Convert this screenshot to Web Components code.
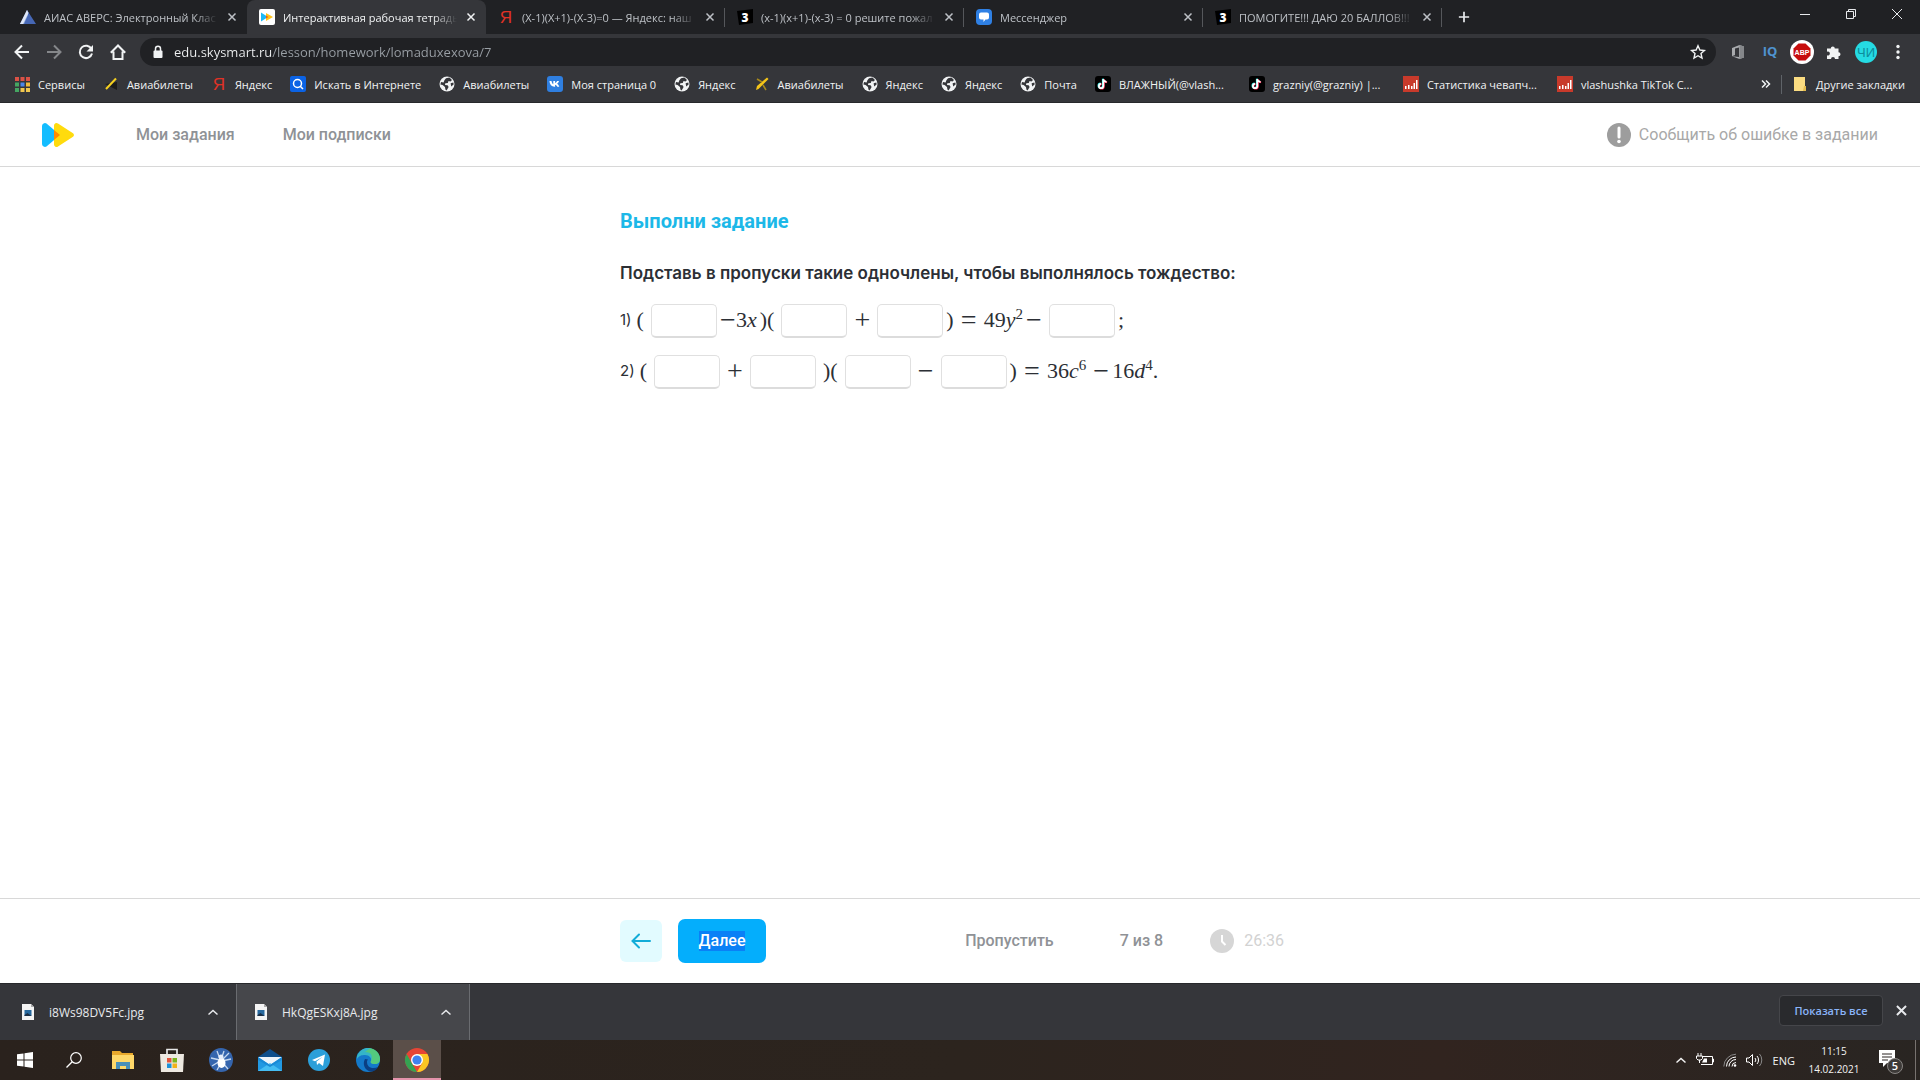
<!DOCTYPE html>
<html lang="ru">
<head>
<meta charset="utf-8">
<title>Интерактивная рабочая тетрадь</title>
<style>
    html, body{
        margin: 0;
        height: 100%;
    }
    body{
        display: flex;
        flex-direction: column;
        background: white;
        font-family: "Open Sans", "Noto Sans", sans-serif;
        font-size: 11px;
    }
    lesson-page{
        flex: 1;
    }
</style>
</head>
<body>
    <browser-tabs></browser-tabs>
    <browser-toolbar></browser-toolbar>
    <bookmarks-bar></bookmarks-bar>
    <lesson-page></lesson-page>
    <downloads-bar></downloads-bar>
    <task-bar></task-bar>

<script>
const globe = '<circle cx="8" cy="8" r="7.5" fill="#f1f3f4"/><path d="M7 2.2 10.5 1.6 13 4 11.5 5.5 9.5 5 8.8 7 6.3 7.2 6 9 8.6 9.3 9.6 11 7.6 14.4 6.4 13.6 6 11 3.6 9 1.4 8.6 2 6 4.6 6.4 5.4 4.2Z" fill="#35363a"/><path d="M11.6 7.2 14.4 6.4 14.6 8.6 12.2 10.4Z" fill="#35363a"/>'
const plane = '<path d="M3 10 13 1.500 14.500 3 4.500 13 2 14Z" fill="#f5c518"/><path d="m3 3 5 3M9 9l3 5" stroke="#a8891c" stroke-width="1.500"/>'

// every icon is [viewBox, markup]
const icons = {
    mountain: ['0 0 16 16', '<path d="M7 1 0 15h6l3-10Z" fill="#8ea9df"/><path d="M7 1 16 15H4L8 6Z" fill="#4667b5"/><path d="M7 1 8.500 4 3 15H0Z" fill="#dfe7f7"/>'],
    sky: ['0 0 16 16', '<rect width="16" height="16" rx="2" fill="#fff"/><path d="M2 3.500 9 8 2 12.500Z" fill="#1ab8f5"/><path d="M7 4 14 8 7 12Z" fill="#ffc31a"/><path d="M7 6.500 9.500 8 7 9.600Z" fill="#e8591c"/>'],
    ya: ['0 0 16 16', '<text x="8" y="14" text-anchor="middle" font-family="Liberation Sans Narrow, Liberation Sans" font-size="17" fill="#e03226">Я</text>'],
    znan: ['0 0 16 16', '<path d="M0 2 16 0v14L2 16Z" fill="#000"/><text x="8" y="12.500" text-anchor="middle" font-family="Open Sans" font-weight="800" font-size="12" fill="#fff">3</text>'],
    messenger: ['0 0 16 16', '<rect width="16" height="16" rx="4" fill="#2f80e4"/><path d="M5 3.500h6a2 2 0 0 1 2 2v3a2 2 0 0 1-2 2H9.500L7.500 13v-2.500H5a2 2 0 0 1-2-2v-3a2 2 0 0 1 2-2Z" fill="#fff"/>'],
    close: ['0 0 10 10', '<path d="m1.500 1.500 7 7m0-7-7 7" stroke="currentColor" stroke-width="1.500"/>'],
    plus: ['0 0 14 14', '<path d="M7 1v12M1 7h12" stroke="currentColor" stroke-width="2"/>'],
    minimize: ['0 0 10 10', '<path d="M0 5.500h10" stroke="currentColor"/>'],
    restore: ['0 0 10 10', '<path d="M.5 2.500h7v7h-7zM2.500 2.500v-2h7v7h-2" fill="none" stroke="currentColor"/>'],
    winclose: ['0 0 10 10', '<path d="m0 0 10 10M10 0 0 10" stroke="currentColor"/>'],
    back: ['0 0 16 16', '<path d="M15 8H2M8 1.500 1.500 8 8 14.500" fill="none" stroke="currentColor" stroke-width="2"/>'],
    reload: ['0 0 16 16', '<path d="M13.500 5A6.200 6.200 0 1 0 14 9.500" fill="none" stroke="currentColor" stroke-width="2"/><path d="M15 1v6.500H8.500Z" fill="currentColor"/>'],
    home: ['0 0 16 16', '<path d="M3.500 7.500V15h9V7.500M.8 8.800 8 1.500l7.200 7.300" fill="none" stroke="currentColor" stroke-width="2"/>'],
    lock: ['0 0 12 14', '<path d="M3.500 6V3.800a2.500 2.500 0 0 1 5 0V6" fill="none" stroke="currentColor" stroke-width="1.500"/><rect x="1.500" y="5.500" width="9" height="7.500" rx="1" fill="currentColor"/>'],
    star: ['0 0 16 16', '<path d="m8 1.800 1.900 4.200 4.500.5-3.400 3 1 4.500L8 11.700 4 14l1-4.500-3.400-3 4.500-.5Z" fill="none" stroke="currentColor" stroke-width="1.400"/>'],
    office: ['0 0 16 16', '<path d="M2 4 9.500 1 14 2.500v11L9.500 15 2 12.300l7 .7V3.500L5 4.500v6.500L2 12.300Z" fill="#a9abae"/><path d="M9.500 1 14 2.500v11L9.500 15Z" fill="#85878a"/>'],
    iq: ['0 0 16 16', '<text x="8" y="12" text-anchor="middle" font-family="Open Sans" font-weight="700" font-size="13" fill="#4f93cf">IQ</text>'],
    abp: ['0 0 24 24', '<circle cx="12" cy="12" r="12" fill="#fff"/><path d="M8.500 3.500h7l5 5v7l-5 5h-7l-5-5v-7Z" fill="#c70d0d"/><text x="12" y="15" text-anchor="middle" font-family="Liberation Sans Narrow, Liberation Sans" font-weight="700" font-size="7" fill="#fff">ABP</text>'],
    puzzle: ['0 0 16 16', '<path d="M1 4.500h3.800a2 2 0 1 1 4 0h3.700v3.800a2 2 0 1 1 0 4V15H9a2 2 0 1 0-4 0H1v-3.700a2 2 0 1 0 0-3.600Z" fill="currentColor"/>'],
    avatar: ['0 0 22 22', '<circle cx="11" cy="11" r="11" fill="#25dbe3"/><text x="11" y="16" text-anchor="middle" font-family="Liberation Sans" font-size="13" fill="#0d8d9c">ЧИ</text>'],
    dots: ['0 0 16 16', '<circle cx="8" cy="2.500" r="1.700"/><circle cx="8" cy="8" r="1.700"/><circle cx="8" cy="13.500" r="1.700"/>'],
    apps: ['0 0 16 16', '<path d="M1 1h4v4H1zM6.500 1h4v4h-4zM12 1h4v4h-4z" fill="#db5246"/><path d="M1 6.500h4v4H1z" fill="#45a662"/><path d="M6.500 6.500h4v4h-4z" fill="#4a86e8"/><path d="M12 6.500h4v4h-4z" fill="#f0b93a"/><path d="M1 12h4v4H1z" fill="#45a662"/><path d="M6.500 12h4v4h-4zM12 12h4v4h-4z" fill="#f0c74e"/>'],
    ticket: ['0 0 16 16', '<path d="m2 8 12 6V6Z" fill="#1c1c1c"/><path d="M3 13 13 2.500" stroke="#f5d020" stroke-width="2"/>'],
    search: ['0 0 16 16', '<rect width="16" height="16" rx="2" fill="#0b63e5"/><circle cx="7.500" cy="7.500" r="4" fill="none" stroke="#fff" stroke-width="1.500"/><path d="m10 10 3 3" stroke="#fff" stroke-width="1.500"/>'],
    vk: ['0 0 16 16', '<rect width="16" height="16" rx="3" fill="#2f7fe0"/><path d="M2.500 5h2c.3 2 1.200 3 1.800 3.200V5h1.800v2c.8-.2 1.500-1 2-2h1.900c-.4 1.300-1.200 2.200-1.900 2.700.8.500 1.700 1.400 2.200 3h-2c-.4-1-1.200-1.800-2.200-2v2h-.5C4.500 10.700 2.700 8.500 2.500 5Z" fill="#fff"/>'],
    globe: ['0 0 16 16', globe],
    plane: ['0 0 16 16', plane],
    tiktok: ['0 0 16 16', '<rect width="16" height="16" rx="3" fill="#000"/><g fill="none" stroke-width="1.800"><path d="M8.300 3v7a2.200 2.200 0 1 1-2.200-2.200M8.300 3c.2 1.600 1.300 2.700 3.200 2.900" stroke="#25f4ee" transform="translate(-.5 -.3)"/><path d="M8.300 3v7a2.200 2.200 0 1 1-2.200-2.200M8.300 3c.2 1.600 1.300 2.700 3.200 2.900" stroke="#fe2c55" transform="translate(.6 .4)"/><path d="M8.300 3v7a2.200 2.200 0 1 1-2.200-2.200M8.300 3c.2 1.600 1.300 2.700 3.200 2.900" stroke="#fff"/></g>'],
    stats: ['0 0 16 16', '<rect width="16" height="16" fill="#c83a2b"/><path d="M2 10h1.500v3H2zM5 9h1.500v4H5zM8 10h1.500v3H8zM10.500 7H12v6h-1.500zM13 4h1.500v9H13z" fill="#fff"/>'],
    folder: ['0 0 16 16', '<path d="M2 1h11v9h1v5H2Z" fill="#fbdc81"/><path d="M12 10h2v5h-3Z" fill="#e5bd4e"/>'],
    chevrons: ['0 0 10 10', '<path d="m1 1.500 3.500 3.500L1 8.500M5 1.500 8.500 5 5 8.500" fill="none" stroke="currentColor" stroke-width="1.500"/>'],
    logo: ['0 0 32 24', '<path d="M0 3a3 3 0 0 1 4.500-2.500L18 12 4.500 23.500A3 3 0 0 1 0 21Z" fill="#14bdff"/><path d="M12 2.500A2.500 2.500 0 0 1 16 .5L31 10.200a2.200 2.200 0 0 1 0 3.600L16 23.500a2.500 2.500 0 0 1-4-2Z" fill="#ffdb0d"/><path d="M12 6.900 18 12l-6 5.100Z" fill="#ff8a00"/>'],
    warn: ['0 0 24 24', '<circle cx="12" cy="12" r="12" fill="#9d9d9d"/><path d="M12 5v9" stroke="#fff" stroke-width="3" stroke-linecap="round"/><circle cx="12" cy="18.500" r="1.800" fill="#fff"/>'],
    prev: ['0 0 20 16', '<path d="M19 8H2M8 1.500 1.500 8 8 14.500" fill="none" stroke="currentColor" stroke-width="2" stroke-linecap="round"/>'],
    clock: ['0 0 24 24', '<circle cx="12" cy="12" r="12" fill="#d6d6d6"/><path d="M12 6v6.500l3.500 3.500" fill="none" stroke="#fff" stroke-width="2"/>'],
    file: ['0 0 12 16', '<path d="M0 0h9l3 3v13H0Z" fill="#f4f4f4"/><path d="M9 0v3h3Z" fill="#aaa"/><path d="M2.500 6h7v6h-7z" fill="#27699e"/><path d="m2.500 11 3-2 4 3h-7z" fill="#1b2f45"/>'],
    caret: ['0 0 12 8', '<path d="m1.500 6.500 4.500-4 4.500 4" fill="none" stroke="currentColor" stroke-width="1.500"/>'],
    windows: ['0 0 16 16', '<path d="m0 2.300 6.500-.9v6H0zM7.500 1.200 16 0v7.500H7.500zM0 8.500h6.500v6L0 13.700zM7.500 8.500H16V16l-8.500-1.200z" fill="#fff"/>'],
    find: ['0 0 16 16', '<circle cx="10" cy="6" r="5.300" fill="none" stroke="#fff" stroke-width="1.200"/><path d="M6.200 9.800.5 15.500" stroke="#fff" stroke-width="1.300"/>'],
    explorer: ['0 0 22 20', '<path d="M0 1h8l2 2h11v16H0z" fill="#e9a92c"/><path d="M0 5h22v14H0z" fill="#ffd869"/><path d="M4 12h14v7h-4v-3H8v3H4z" fill="#4a90b8"/>'],
    store: ['0 0 24 24', '<path d="M7 7V1.500h10V7" fill="none" stroke="#e8e8e8" stroke-width="1.700"/><path d="M0 6h24l-1 18H1z" fill="#eee9e1"/><path d="M7 10h4.500v4.500H7z" fill="#e2533b"/><path d="M12.500 10H17v4.500h-4.500z" fill="#7ab51d"/><path d="M7 15.500h4.500V20H7z" fill="#1c91d8"/><path d="M12.500 15.500H17V20h-4.500z" fill="#f2b118"/>'],
    spider: ['0 0 24 24', '<circle cx="12" cy="12" r="12" fill="#3565ad"/><path d="m12 12 3-9M13 12l7-7M13 13l9-2M13 14l6 7M12 15l-4 7M11 13l-8 5M11 12 2 10M11 11 8 3" stroke="#c8d9ef" stroke-width="1.300"/><ellipse cx="12.500" cy="15" rx="4" ry="5" fill="#fff"/><circle cx="12" cy="9" r="2.500" fill="#e7eefa"/>'],
    mail: ['0 0 24 22', '<path d="M0 8 12 0l12 8v3H0z" fill="#0f4f8c"/><path d="M0 8h24v14H0z" fill="#2299e2"/><path d="M0 8h24L12 16z" fill="#eef5fb"/><path d="m0 22 12-8 12 8z" fill="#45bdf2"/><path d="M0 8 12 16 24 8v3l-12 7L0 11z" fill="#1a8ad6"/>'],
    telegram: ['0 0 22 22', '<circle cx="11" cy="11" r="11" fill="#2b9fd9"/><path d="m4 11 13-5.500-2 11.500-4-3-2 2-.5-3.500L14.500 8 7 12.200Z" fill="#fff"/>'],
    edge: ['0 0 24 24', '<circle cx="12" cy="12" r="12" fill="#1479c9"/><path d="M1 8C4 1 10-1 15 .5c6 1.700 9 6.500 9 10.500 0 3-2 5-5 5-4 0-5-1.500-4-3 1-3-2-6-6-6-3 0-6 .5-8 4Z" fill="#35b5c8"/><path d="M14 .3c7 1.200 10 6.200 10 10.700 0 3-2 5-5 5-4 0-5-1.500-4-3 2-4 1-9-6-9Z" fill="#5cd06b" opacity=".8"/><path d="M9 11c-3 5 0 12 6 12.500 3 0 6-2 7-4.500-4 2-11 1.500-11-5 0-1 .5-2 1-2.500Z" fill="#0b3f83"/>'],
    chrome: ['0 0 24 24', '<circle cx="12" cy="12" r="12" fill="#e64535"/><path d="M1.600 6 7 15.500 12 24A12 12 0 0 1 1.600 6Z" fill="#34a352"/><path d="M12 6h10.400A12 12 0 0 1 12 24l5.200-9Z" fill="#fbc723"/><circle cx="12" cy="12" r="6" fill="#fff"/><circle cx="12" cy="12" r="4.600" fill="#3f82ee"/>'],
    battery: ['0 0 18 14', '<path d="M7 3.500h9.500v8H5M16.500 6h1v3h-1" fill="none" stroke="#fff"/><path d="M8 5.500h3v4H6z" fill="#fff"/><path d="M2 0v3M5 0v3M.5 3h6v2.500L5 7H2L.5 5.500zM3.500 7v3" fill="none" stroke="#fff"/>'],
    wifi: ['0 0 14 14', '<g fill="none" stroke="#fff"><path d="M9 13.500A4 4 0 0 1 13 9.500M6 13.500a7 7 0 0 1 7-7M3.500 13.500a9.500 9.500 0 0 1 9.500-9.500" /><path d="M.8 13.500A12.500 12.500 0 0 1 13 1.200" stroke="#888"/></g><circle cx="12" cy="12.500" r="1.300" fill="#fff"/>'],
    volume: ['0 0 18 14', '<path d="M.5 5v4h2.500l3.500 3.500v-11L3 5zM9 5a3 3 0 0 1 0 4M11 3a6 6 0 0 1 0 8" fill="none" stroke="#fff"/><path d="M13.500 1a9 9 0 0 1 0 12" fill="none" stroke="#888"/>'],
    notes: ['0 0 24 24', '<path d="M0 0h16v13H8l-4 4v-4H0z" fill="#fff"/><path d="M3 4h10M3 7h10M3 10h6" stroke="#2a2523"/><circle cx="16" cy="16" r="7.500" fill="#3d3a38" stroke="#8a8785"/><text x="16" y="20" text-anchor="middle" font-family="Open Sans" font-weight="600" font-size="11" fill="#fff">5</text>']
}

class UiIcon extends HTMLElement{
    connectedCallback(){
        const shadowRoot = this.attachShadow({mode: 'open'})
        const [box, markup] = icons[this.getAttribute('name')]
        const [, , w, h] = box.split(' ')
        const width = this.getAttribute('width') || w
        shadowRoot.innerHTML = `<style>
                    :host{
                        display: inline-flex;
                        flex: none;
                    }
                    svg{
                        overflow: visible;
                    }
                </style>
                <svg viewBox="${box}" width="${width}" height="${Math.round(width * h / w)}" fill="currentColor" aria-hidden="true">${markup}</svg>`
    }
}
customElements.define('ui-icon', UiIcon)

const buttonCss = `
    button{
        border: 0;
        padding: 0;
        background: none;
        color: inherit;
        font: inherit;
        display: flex;
        align-items: center;
        justify-content: center;
        white-space: nowrap;
    }
    a{
        color: inherit;
        text-decoration: none;
        white-space: nowrap;
    }`

class BrowserTab extends HTMLElement{
    connectedCallback(){
        const shadowRoot = this.attachShadow({mode: 'open'})
        const css = `<style>${buttonCss}
                    :host{
                        display: flex;
                        align-items: center;
                        flex: 0 1 239px;
                        min-width: 0;
                        height: 34px;
                        box-sizing: border-box;
                        padding: 0 9px 0 12px;
                        color: #bdc1c6;
                        position: relative;
                    }
                    :host([line])::after{
                        content: "";
                        position: absolute;
                        right: 0;
                        top: 8px;
                        width: 1px;
                        height: 19px;
                        background: #55575b;
                    }
                    :host([active]){
                        background: #35363a;
                        border-radius: 8px 8px 0 0;
                        color: #f1f3f4;
                    }
                    .title{
                        flex: 1;
                        min-width: 0;
                        overflow: hidden;
                        justify-content: flex-start;
                        margin: 0 8px;
                        -webkit-mask-image: linear-gradient(to left, transparent, black 24px);
                        mask-image: linear-gradient(to left, transparent, black 24px);
                    }
                    .close{
                        width: 12px;
                    }
                </style>`
        const html = `<ui-icon name="${this.getAttribute('icon')}"></ui-icon>
                    <button class="title"><slot></slot></button>
                    <button class="close" aria-label="Закрыть вкладку"><ui-icon name="close"></ui-icon></button>`
        shadowRoot.innerHTML = css + html
    }
}
customElements.define('browser-tab', BrowserTab)

class BrowserTabs extends HTMLElement{
    connectedCallback(){
        const shadowRoot = this.attachShadow({mode: 'open'})
        const css = `<style>${buttonCss}
                    :host{
                        display: flex;
                        height: 34px;
                        padding-left: 8px;
                        background: #202124;
                        color: #e8eaed;
                    }
                    .new{
                        width: 44px;
                    }
                    .window{
                        display: flex;
                        margin-left: auto;
                        height: 28px;
                    }
                    .window button{
                        width: 46px;
                    }
                </style>`
        const html = `<browser-tab icon="mountain">АИАС АВЕРС: Электронный Клас</browser-tab>
                    <browser-tab icon="sky" active>Интерактивная рабочая тетрадь</browser-tab>
                    <browser-tab icon="ya" line>(X-1)(X+1)-(X-3)=0 — Яндекс: наш</browser-tab>
                    <browser-tab icon="znan" line>(x-1)(x+1)-(x-3) = 0 решите пожал</browser-tab>
                    <browser-tab icon="messenger" line>Мессенджер</browser-tab>
                    <browser-tab icon="znan" line>ПОМОГИТЕ!!! ДАЮ 20 БАЛЛОВ!!!</browser-tab>
                    <button class="new" aria-label="Новая вкладка"><ui-icon name="plus" width="12"></ui-icon></button>
                    <div class="window">
                        <button aria-label="Свернуть"><ui-icon name="minimize"></ui-icon></button>
                        <button aria-label="Свернуть в окно"><ui-icon name="restore"></ui-icon></button>
                        <button aria-label="Закрыть"><ui-icon name="winclose"></ui-icon></button>
                    </div>`
        shadowRoot.innerHTML = css + html
    }
}
customElements.define('browser-tabs', BrowserTabs)

class BrowserToolbar extends HTMLElement{
    connectedCallback(){
        const shadowRoot = this.attachShadow({mode: 'open'})
        const css = `<style>${buttonCss}
                    :host{
                        display: flex;
                        align-items: center;
                        padding: 4px 6px;
                        background: #35363a;
                        color: #f1f3f4;
                    }
                    button{
                        width: 32px;
                        height: 28px;
                    }
                    .next{
                        color: #85878a;
                    }
                    .next ui-icon{
                        transform: scaleX(-1);
                    }
                    label{
                        flex: 1;
                        display: flex;
                        align-items: center;
                        height: 28px;
                        box-sizing: border-box;
                        margin: 0 6px;
                        padding: 0 2px 0 12px;
                        border-radius: 14px;
                        background: #202124;
                    }
                    input{
                        flex: 1;
                        min-width: 0;
                        margin: 0 0 0 10px;
                        padding: 0;
                        border: 0;
                        outline: 0;
                        font: 13px/20px "Open Sans", sans-serif;
                        /* host is brighter than the path */
                        background: linear-gradient(90deg, #f1f3f4 97px, #9aa0a6 97px);
                        -webkit-background-clip: text;
                        background-clip: text;
                        color: transparent;
                    }
                </style>`
        const html = `<button aria-label="Назад"><ui-icon name="back"></ui-icon></button>
                    <button class="next" aria-label="Вперёд"><ui-icon name="back"></ui-icon></button>
                    <button aria-label="Обновить"><ui-icon name="reload"></ui-icon></button>
                    <button aria-label="Домой"><ui-icon name="home"></ui-icon></button>
                    <label><ui-icon name="lock"></ui-icon>
                        <input type="text" aria-label="Адрес" value="edu.skysmart.ru/lesson/homework/lomaduxexova/7">
                        <button aria-label="В закладки"><ui-icon name="star"></ui-icon></button>
                    </label>
                    <button aria-label="Office"><ui-icon name="office"></ui-icon></button>
                    <button aria-label="IQ"><ui-icon name="iq"></ui-icon></button>
                    <button aria-label="Adblock Plus"><ui-icon name="abp"></ui-icon></button>
                    <button aria-label="Расширения"><ui-icon name="puzzle"></ui-icon></button>
                    <button aria-label="Профиль"><ui-icon name="avatar"></ui-icon></button>
                    <button aria-label="Меню"><ui-icon name="dots"></ui-icon></button>`
        shadowRoot.innerHTML = css + html
    }
}
customElements.define('browser-toolbar', BrowserToolbar)

const bookmarks = [
    ['apps', 'Сервисы'],
    ['ticket', 'Авиабилеты'],
    ['ya', 'Яндекс'],
    ['search', 'Искать в Интернете'],
    ['globe', 'Авиабилеты'],
    ['vk', 'Моя страница 0'],
    ['globe', 'Яндекс'],
    ['plane', 'Авиабилеты'],
    ['globe', 'Яндекс'],
    ['globe', 'Яндекс'],
    ['globe', 'Почта'],
    ['tiktok', 'ВЛАЖНЫЙ(@vlash...'],
    ['tiktok', 'grazniy(@grazniy) |...'],
    ['stats', 'Статистика чевапч...'],
    ['stats', 'vlashushka TikTok С...']
]

class BookmarksBar extends HTMLElement{
    connectedCallback(){
        const shadowRoot = this.attachShadow({mode: 'open'})
        const css = `<style>${buttonCss}
                    :host{
                        display: flex;
                        align-items: center;
                        height: 33px;
                        box-sizing: border-box;
                        padding: 0 15px 4px 14px;
                        border-bottom: 1px solid #27282b;
                        background: #35363a;
                        color: #f1f3f4;
                    }
                    nav{
                        display: flex;
                        flex: 1;
                        gap: 18px;
                        min-width: 0;
                    }
                    a{
                        display: flex;
                        align-items: center;
                        gap: 8px;
                    }
                    .long{
                        min-width: 136px;
                    }
                    .other{
                        margin-left: 10px;
                        padding-left: 10px;
                        border-left: 1px solid #5f6368;
                        height: 19px;
                    }
                </style>`
        const items = bookmarks.map(([icon, text]) => `<a href="#"${text.endsWith('...') ? ' class="long"' : ''}><ui-icon name="${icon}"></ui-icon>${text}</a>`).join('')
        const html = `<nav>${items}</nav>
                    <button aria-label="Ещё закладки"><ui-icon name="chevrons"></ui-icon></button>
                    <a class="other" href="#"><ui-icon name="folder"></ui-icon>Другие закладки</a>`
        shadowRoot.innerHTML = css + html
    }
}
customElements.define('bookmarks-bar', BookmarksBar)

class MathBlank extends HTMLElement{
    connectedCallback(){
        const shadowRoot = this.attachShadow({mode: 'open'})
        shadowRoot.innerHTML = `<style>
                    :host{
                        display: block;
                        margin: 0 7px;
                    }
                    input{
                        display: block;
                        width: 66px;
                        height: 34px;
                        box-sizing: border-box;
                        border: 1px solid #e0e0e0;
                        border-bottom: 2px solid #dcdcdc;
                        border-radius: 5px;
                        background: white;
                        font: 18px "Liberation Serif", serif;
                    }
                </style>
                <input type="text" aria-label="Пропуск">`
    }
}
customElements.define('math-blank', MathBlank)

class LessonPage extends HTMLElement{
    connectedCallback(){
        const shadowRoot = this.attachShadow({mode: 'open'})
        const css = `<style>${buttonCss}
                    :host{
                        display: flex;
                        flex-direction: column;
                        min-height: 0;
                        background: white;
                        color: #8f9296;
                        font: 500 16px/20px Roboto, sans-serif;
                    }
                    header{
                        display: flex;
                        align-items: center;
                        height: 64px;
                        box-sizing: border-box;
                        padding: 0 42px;
                        border-bottom: 1px solid #d8d8d8;
                    }
                    header a{
                        display: flex;
                    }
                    nav{
                        display: flex;
                        gap: 48px;
                        margin-left: 62px;
                    }
                    .report{
                        gap: 8px;
                        margin-left: auto;
                        color: #a8a8a8;
                        font-weight: 400;
                    }
                    main, .controls{
                        width: 100%;
                        max-width: 680px;
                        margin: 0 auto;
                    }
                    main{
                        flex: 1;
                        padding-top: 42px;
                    }
                    h1{
                        margin: 0;
                        color: #1cb8e8;
                        font: 700 20px/24px Roboto, sans-serif;
                    }
                    p{
                        margin: 28px 0 19px;
                        color: #2c2f35;
                        font: 600 17px/24px Inter, sans-serif;
                        white-space: nowrap;
                    }
                    .line{
                        display: flex;
                        align-items: center;
                        margin-bottom: 17px;
                        color: #2c2f35;
                        font: 22px/30px "Liberation Serif", serif;
                        white-space: nowrap;
                    }
                    .line > span{
                        padding-bottom: 2px;
                    }
                    .num{
                        font: 400 15px/20px Inter, sans-serif;
                        margin-right: 5px;
                    }
                    .op{
                        width: 16px;
                        font-size: 28px;
                        text-align: center;
                    }
                    .after{
                        margin-left: -4px;
                    }
                    .space{
                        margin-left: 7px;
                    }
                    .thin{
                        margin-left: 3px;
                    }
                    sup{
                        font-size: 15px;
                        line-height: 0;
                    }
                    footer{
                        border-top: 1px solid #d8d8d8;
                    }
                    .controls{
                        display: flex;
                        align-items: center;
                        height: 84px;
                    }
                    .prev{
                        width: 42px;
                        height: 42px;
                        margin-right: 16px;
                        border-radius: 6px;
                        background: #e2fbff;
                        color: #12acd8;
                    }
                    .next{
                        width: 88px;
                        height: 44px;
                        border-radius: 7px;
                        background: #04aefc;
                        color: white;
                    }
                    .next span{
                        background: #0a80f6;
                    }
                    .skip{
                        margin-left: auto;
                    }
                    .step{
                        margin: 0 47px 0 66px;
                    }
                    .timer{
                        display: flex;
                        align-items: center;
                        gap: 10px;
                        margin-right: 16px;
                        color: #d2d2d2;
                        font-weight: 400;
                    }
                </style>`
        const html = `<header>
                        <a href="#" aria-label="Skysmart"><ui-icon name="logo"></ui-icon></a>
                        <nav>
                            <a href="#">Мои задания</a>
                            <a href="#">Мои подписки</a>
                        </nav>
                        <button class="report"><ui-icon name="warn"></ui-icon>Сообщить об ошибке в задании</button>
                    </header>
                    <main>
                        <h1>Выполни задание</h1>
                        <p>Подставь в пропуски такие одночлены, чтобы выполнялось тождество:</p>
                        <div class="line"><span class="num">1)</span><span>(</span><math-blank></math-blank><span class="op after">−</span><span>3<i>x</i></span><span class="thin">)(</span><math-blank></math-blank><span class="op">+</span><math-blank></math-blank><span class="after">)</span><span class="op space">=</span><span class="space">49<i>y</i><sup>2</sup></span><span class="op thin">−</span><math-blank></math-blank><span class="after">;</span></div>
                        <div class="line"><span class="num">2)</span><span>(</span><math-blank></math-blank><span class="op">+</span><math-blank></math-blank><span>)(</span><math-blank></math-blank><span class="op">−</span><math-blank></math-blank><span class="after">)</span><span class="op space">=</span><span class="space">36<i>c</i><sup>6</sup></span><span class="op space">−</span><span class="thin">16<i>d</i><sup>4</sup>.</span></div>
                    </main>
                    <footer>
                        <div class="controls">
                            <button class="prev" aria-label="Назад"><ui-icon name="prev"></ui-icon></button>
                            <button class="next"><span>Далее</span></button>
                            <button class="skip">Пропустить</button>
                            <span class="step">7 из 8</span>
                            <span class="timer"><ui-icon name="clock"></ui-icon>26:36</span>
                        </div>
                    </footer>`
        shadowRoot.innerHTML = css + html
    }
}
customElements.define('lesson-page', LessonPage)

class DownloadItem extends HTMLElement{
    connectedCallback(){
        const shadowRoot = this.attachShadow({mode: 'open'})
        const css = `<style>${buttonCss}
                    :host{
                        display: flex;
                        align-items: center;
                        width: 233px;
                        box-sizing: border-box;
                        padding: 0 17px 0 18px;
                        border-right: 1px solid #6a6c70;
                    }
                    :host([active]){
                        background: #46474b;
                    }
                    .open{
                        flex: 1;
                        justify-content: flex-start;
                        gap: 15px;
                    }
                </style>`
        const html = `<button class="open"><ui-icon name="file"></ui-icon><slot></slot></button>
                    <button aria-label="Действия"><ui-icon name="caret"></ui-icon></button>`
        shadowRoot.innerHTML = css + html
    }
}
customElements.define('download-item', DownloadItem)

class DownloadsBar extends HTMLElement{
    connectedCallback(){
        const shadowRoot = this.attachShadow({mode: 'open'})
        const css = `<style>${buttonCss}
                    :host{
                        display: flex;
                        height: 57px;
                        box-sizing: border-box;
                        padding-left: 4px;
                        border-top: 1px solid #27282b;
                        background: #35363a;
                        color: #e8eaed;
                        font-size: 12px;
                    }
                    .right{
                        display: flex;
                        align-items: center;
                        gap: 12px;
                        margin-left: auto;
                        padding: 0 12px 3px 0;
                    }
                    .all{
                        width: 104px;
                        height: 31px;
                        border: 1px solid #45464a;
                        border-radius: 4px;
                        background: #292a2d;
                        color: #8ab4f8;
                        font-size: 11px;
                        font-weight: 600;
                    }
                </style>`
        const html = `<download-item>i8Ws98DV5Fc.jpg</download-item>
                    <download-item active>HkQgESKxj8A.jpg</download-item>
                    <div class="right">
                        <button class="all">Показать все</button>
                        <button aria-label="Закрыть"><ui-icon name="close" width="13"></ui-icon></button>
                    </div>`
        shadowRoot.innerHTML = css + html
    }
}
customElements.define('downloads-bar', DownloadsBar)

const apps = [
    ['windows', 'Пуск'],
    ['find', 'Поиск'],
    ['explorer', 'Проводник'],
    ['store', 'Store'],
    ['spider', 'Косынка'],
    ['mail', 'Почта'],
    ['telegram', 'Telegram'],
    ['edge', 'Edge'],
    ['chrome', 'Chrome']
]

class TaskBar extends HTMLElement{
    connectedCallback(){
        const shadowRoot = this.attachShadow({mode: 'open'})
        const css = `<style>${buttonCss}
                    :host{
                        display: flex;
                        height: 40px;
                        padding-left: 1px;
                        background: linear-gradient(90deg, #2a221d, #2c241e 50%, #31241f 75%, #292522);
                        color: #f3f3f3;
                    }
                    .app{
                        width: 48px;
                        margin-right: 1px;
                    }
                    .app:last-of-type{
                        box-sizing: border-box;
                        border: solid transparent;
                        border-width: 2px 0;
                        border-bottom-color: #e594ac;
                        background: #5b4f49;
                    }
                    .tray{
                        display: flex;
                        align-items: center;
                        margin-left: auto;
                        gap: 9px;
                    }
                    .clock{
                        flex-direction: column;
                        width: 60px;
                        line-height: 18px;
                        font-size: 10px;
                        padding-bottom: 1px;
                    }
                    .notes{
                        padding: 4px 12px 0 6px;
                        border-right: 1px solid #77726f;
                        height: 40px;
                        margin-right: 4px;
                    }
                </style>`
        const items = apps.map(([icon, name]) => `<button class="app" aria-label="${name}"><ui-icon name="${icon}"></ui-icon></button>`).join('')
        const html = `${items}
                    <div class="tray">
                        <button aria-label="Скрытые значки"><ui-icon name="caret"></ui-icon></button>
                        <button aria-label="Батарея"><ui-icon name="battery"></ui-icon></button>
                        <button aria-label="Сеть"><ui-icon name="wifi"></ui-icon></button>
                        <button aria-label="Громкость"><ui-icon name="volume"></ui-icon></button>
                        <button>ENG</button>
                        <button class="clock"><span>11:15</span><span>14.02.2021</span></button>
                        <button class="notes" aria-label="Уведомления"><ui-icon name="notes"></ui-icon></button>
                    </div>`
        shadowRoot.innerHTML = css + html
    }
}
customElements.define('task-bar', TaskBar)
</script>
</body>
</html>
